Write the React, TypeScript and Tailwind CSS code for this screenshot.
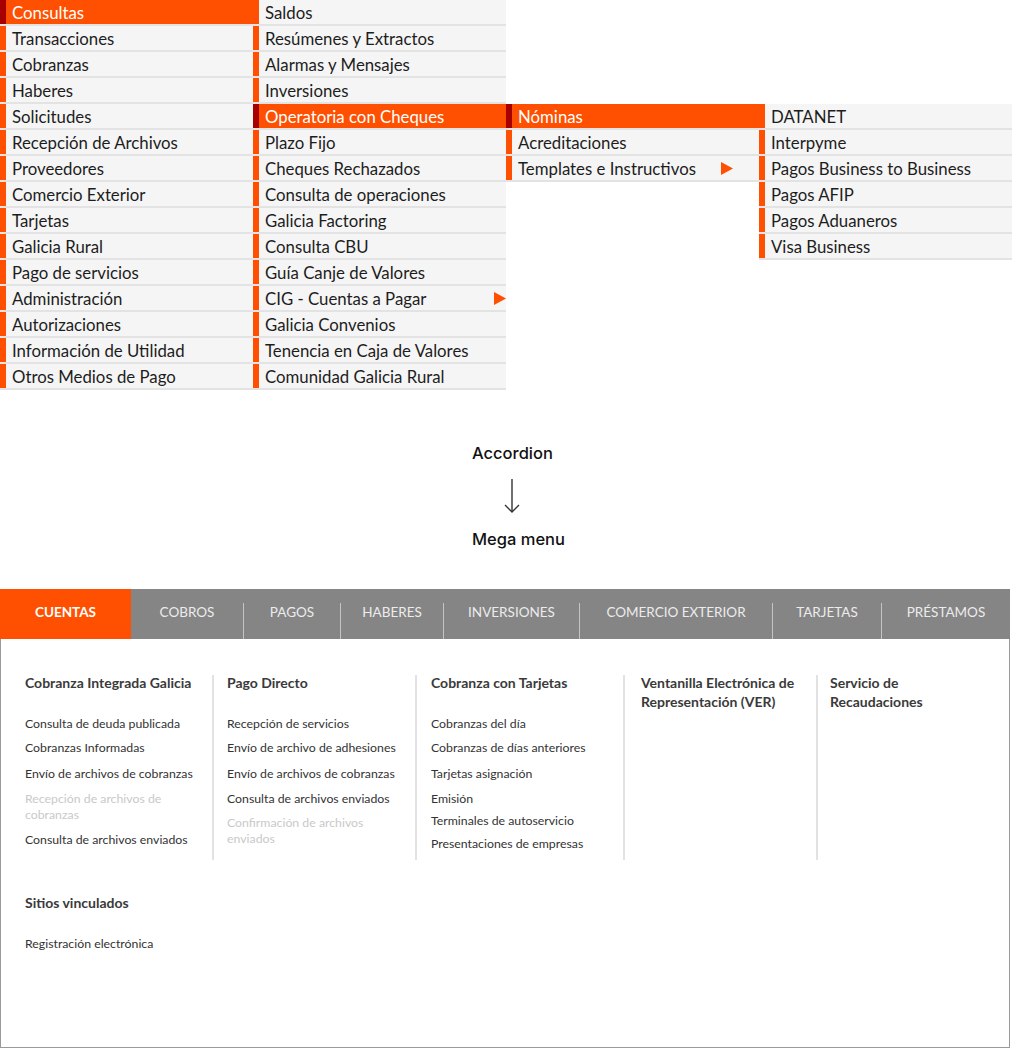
import React from "react";

type Item = { label: string; active?: boolean; arrow?: string };

const col1: Item[] = [
  { label: "Consultas", active: true },
  { label: "Transacciones" },
  { label: "Cobranzas" },
  { label: "Haberes" },
  { label: "Solicitudes" },
  { label: "Recepción de Archivos" },
  { label: "Proveedores" },
  { label: "Comercio Exterior" },
  { label: "Tarjetas" },
  { label: "Galicia Rural" },
  { label: "Pago de servicios" },
  { label: "Administración" },
  { label: "Autorizaciones" },
  { label: "Información de Utilidad" },
  { label: "Otros Medios de Pago" },
];

const col2: Item[] = [
  { label: "Saldos" },
  { label: "Resúmenes y Extractos" },
  { label: "Alarmas y Mensajes" },
  { label: "Inversiones" },
  { label: "Operatoria con Cheques", active: true },
  { label: "Plazo Fijo" },
  { label: "Cheques Rechazados" },
  { label: "Consulta de operaciones" },
  { label: "Galicia Factoring" },
  { label: "Consulta CBU" },
  { label: "Guía Canje de Valores" },
  { label: "CIG - Cuentas a Pagar", arrow: "mr-0" },
  { label: "Galicia Convenios" },
  { label: "Tenencia en Caja de Valores" },
  { label: "Comunidad Galicia Rural" },
];

const col3: Item[] = [
  { label: "Nóminas", active: true },
  { label: "Acreditaciones" },
  { label: "Templates e Instructivos", arrow: "mr-[26px]" },
];

const col4: Item[] = [
  { label: "DATANET" },
  { label: "Interpyme" },
  { label: "Pagos Business to Business" },
  { label: "Pagos AFIP" },
  { label: "Pagos Aduaneros" },
  { label: "Visa Business" },
];

const Triangle = ({ className }: { className: string }) => (
  <svg width="12" height="13" viewBox="0 0 12 13" className={className}>
    <polygon points="0,0 12,6.5 0,13" fill="#fe5000" />
  </svg>
);

const AccRow = ({ item }: { item: Item }) => (
  <div
    className={`flex h-[26px] border-b-2 border-[#e3e3e3] ${
      item.active ? "bg-[#fe5000]" : "bg-[#f5f5f5]"
    }`}
  >
    <div className={`w-[6px] ${item.active ? "bg-[#a60000]" : "bg-[#fe5000]"}`} />
    <div
      className={`flex flex-1 items-center justify-between pl-[6px] pt-px text-[16.8px] leading-[24px] ${
        item.active ? "text-white" : "text-[#1d1d1d]"
      }`}
    >
      <span>{item.label}</span>
      {item.arrow && <Triangle className={item.arrow} />}
    </div>
  </div>
);

const AccColumn = ({ items, offset }: { items: Item[]; offset?: boolean }) => (
  <div className={`w-[253px] ${offset ? "pt-[104px]" : ""}`}>
    {items.map((it) => (
      <AccRow key={it.label} item={it} />
    ))}
  </div>
);

const tabs = [
  { label: "COBROS", w: "w-[112px]" },
  { label: "PAGOS", w: "w-[96px]" },
  { label: "HABERES", w: "w-[102px]" },
  { label: "INVERSIONES", w: "w-[135px]" },
  { label: "COMERCIO EXTERIOR", w: "w-[192px]" },
  { label: "TARJETAS", w: "w-[108px]" },
  { label: "PRÉSTAMOS", w: "w-[128px]" },
];

type Link = { t: string; off?: boolean; mt: string };
type Group = { title: string[]; links: Link[]; cls: string };

const groups: Group[] = [
  {
    title: ["Cobranza Integrada Galicia"],
    cls: "w-[187px]",
    links: [
      { t: "Consulta de deuda publicada", mt: "mt-[24px]" },
      { t: "Cobranzas Informadas", mt: "mt-[8px]" },
      { t: "Envío de archivos de cobranzas", mt: "mt-[10px]" },
      { t: "Recepción de archivos de cobranzas", off: true, mt: "mt-[9px]" },
      { t: "Consulta de archivos enviados", mt: "mt-[9px]" },
    ],
  },
  {
    title: ["Pago Directo"],
    cls: "w-[203px] border-l-2 border-[#e2e2e2] pl-[13px]",
    links: [
      { t: "Recepción de servicios", mt: "mt-[24px]" },
      { t: "Envío de archivo de adhesiones", mt: "mt-[8px]" },
      { t: "Envío de archivos de cobranzas", mt: "mt-[10px]" },
      { t: "Consulta de archivos enviados", mt: "mt-[9px]" },
      { t: "Confirmación de archivos enviados", off: true, mt: "mt-[8px]" },
    ],
  },
  {
    title: ["Cobranza con Tarjetas"],
    cls: "w-[208px] border-l-2 border-[#e2e2e2] pl-[14px]",
    links: [
      { t: "Cobranzas del día", mt: "mt-[24px]" },
      { t: "Cobranzas de días anteriores", mt: "mt-[8px]" },
      { t: "Tarjetas asignación", mt: "mt-[10px]" },
      { t: "Emisión", mt: "mt-[9px]" },
      { t: "Terminales de autoservicio", mt: "mt-[6px]" },
      { t: "Presentaciones de empresas", mt: "mt-[7px]" },
    ],
  },
  {
    title: ["Ventanilla Electrónica de", "Representación (VER)"],
    cls: "w-[193px] border-l-2 border-[#e2e2e2] pl-[16px]",
    links: [],
  },
  {
    title: ["Servicio de", "Recaudaciones"],
    cls: "w-[170px] border-l-2 border-[#e2e2e2] pl-[12px]",
    links: [],
  },
];

const MegaGroup = ({ g }: { g: Group }) => (
  <div className={`flex h-[185px] flex-col ${g.cls}`}>
    <div className="-mt-[2px] text-[14px] font-bold leading-[19px] text-[#3a3a3a]">
      {g.title.map((l) => (
        <div key={l}>{l}</div>
      ))}
    </div>
    {g.links.map((l) => (
      <div
        key={l.t}
        className={`pr-4 text-[12.3px] leading-[16px] ${l.mt} ${
          l.off ? "text-[#c9c9c9]" : "text-[#333333]"
        }`}
      >
        {l.t}
      </div>
    ))}
  </div>
);

export default function App() {
  return (
    <div className="w-[1012px] bg-white pb-px font-['Lato',sans-serif]">
      <div className="flex">
        <AccColumn items={col1} />
        <AccColumn items={col2} />
        <AccColumn items={col3} offset />
        <AccColumn items={col4} offset />
      </div>

      <div className="flex flex-col items-start pl-[472px] pt-[53px] font-['Inter',sans-serif] text-[16.5px] font-medium leading-[20px] text-[#111]">
        <div>Accordion</div>
        <svg width="16" height="34" viewBox="0 0 16 34" className="ml-[32px] mt-[16px]">
          <line x1="8" y1="0" x2="8" y2="33" stroke="#333" strokeWidth="1.4" />
          <polyline points="1,26 8,33 15,26" fill="none" stroke="#333" strokeWidth="1.4" />
        </svg>
        <div className="mt-[16px]">Mega menu</div>
      </div>

      <div className="mt-[40px] w-[1010px]">
        <nav className="flex h-[50px] bg-[#858585] text-[13.5px]">
          <div className="flex w-[131px] items-center justify-center bg-[#fe5000] pb-[3px] font-bold text-white">
            CUENTAS
          </div>
          {tabs.map((t, i) => (
            <React.Fragment key={t.label}>
              {i > 0 && <div className="h-[36px] w-px self-end bg-[#c4c4c4]" />}
              <div className={`flex items-center justify-center pb-[3px] text-[#ececec] ${t.w}`}>
                {t.label}
              </div>
            </React.Fragment>
          ))}
        </nav>
        <div className="h-[409px] border border-t-0 border-[#9a9a9a] pl-[24px] pt-[36px]">
          <div className="flex">
            {groups.map((g) => (
              <MegaGroup key={g.title[0]} g={g} />
            ))}
          </div>
          <div className="mt-[33px] text-[14px] font-bold leading-[19px] text-[#3a3a3a]">
            Sitios vinculados
          </div>
          <div className="mt-[24px] text-[12.3px] leading-[16px] text-[#333333]">
            Registración electrónica
          </div>
        </div>
      </div>
    </div>
  );
}
